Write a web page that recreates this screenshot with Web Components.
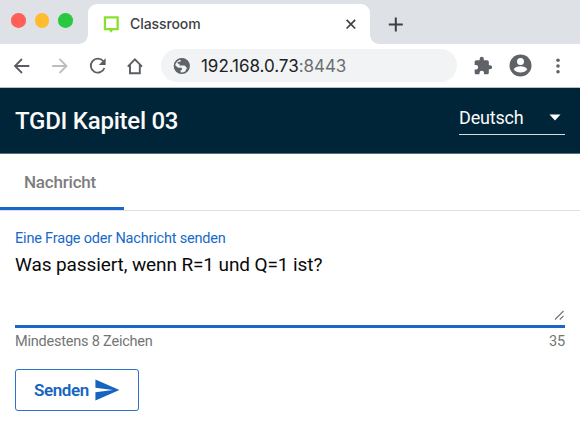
<!DOCTYPE html>
<html lang="de">
<head>
<meta charset="utf-8">
<title>Classroom</title>
<style>
html, body { margin: 0; height: 100%; background: #fff; overflow: hidden; }
body { font-family: Roboto, "Liberation Sans", sans-serif; }
</style>
</head>
<body>
<browser-window>
  <tab-strip slot="chrome">Classroom</tab-strip>
  <nav-bar slot="chrome"><span slot="host">192.168.0.73</span><span slot="port">:8443</span></nav-bar>
  <app-header>TGDI Kapitel 03<language-select slot="action">Deutsch</language-select></app-header>
  <app-tabs>Nachricht</app-tabs>
  <message-field>
    <span slot="label">Eine Frage oder Nachricht senden</span>
    <span slot="value">Was passiert, wenn R=1 und Q=1 ist?</span>
    <span slot="hint">Mindestens 8 Zeichen</span>
    <span slot="count">35</span>
  </message-field>
  <send-button>Senden</send-button>
</browser-window>
<script>
const define = (name, markup) => customElements.define(name, class extends HTMLElement {
  constructor() {
    super();
    this.attachShadow({ mode: 'open' }).innerHTML = markup;
  }
});

define('browser-window', `
<style>
:host { display: flex; flex-direction: column; width: 580px; height: 429px; background: #fff; }
</style>
<slot name="chrome"></slot><slot></slot>`);

define('tab-strip', `
<style>
:host { display: flex; box-sizing: border-box; height: 44px; background: #dee1e6; font: 14px/18px Inter, sans-serif; color: #3c4043; }
.lights { display: flex; gap: 9px; padding: 13px 0 0 11px; width: 77px; box-sizing: border-box; }
.lights i { width: 14.6px; height: 14.6px; flex: none; border-radius: 50%; }
.tab { position: relative; display: flex; align-items: center; box-sizing: border-box; width: 282px; height: 40px; margin: 4px 0 0 11px; padding: 0 13px 0 15px; background: #fff; border-radius: 9px 9px 0 0; }
.tab::before, .tab::after { content: ""; position: absolute; bottom: 0; width: 9px; height: 9px; }
.tab::before { left: -9px; background: radial-gradient(circle at 0 0, transparent 8.5px, #fff 9px); }
.tab::after { right: -9px; background: radial-gradient(circle at 100% 0, transparent 8.5px, #fff 9px); }
.title { flex: 1; margin-left: 11px; letter-spacing: -.08px; font-weight: 450; }
svg { display: block; flex: none; }
.plus { margin: 16px 0 0 17px; }
</style>
<div class="lights"><i style="background:#ff5f57"></i><i style="background:#febc2e"></i><i style="background:#28c840"></i></div>
<div class="tab">
  <svg width="16" height="18" viewBox="0 0 16 18"><path fill="#8be02f" fill-rule="evenodd" d="M.8 1.2h15v14H10l-2 2.600-2-2.600H.8zM3.100 3.500v9.400h10.400v-9.400z"/></svg>
  <span class="title"><slot></slot></span>
  <svg width="12" height="12" viewBox="0 0 12 12"><path d="M1.600 1.900l8.600 8.600M10.200 1.900l-8.600 8.600" stroke="#3c4043" stroke-width="1.700"/></svg>
</div>
<svg class="plus" width="16" height="16" viewBox="0 0 16 16"><path d="M8.800 1.600v14M1.800 8.600h14" stroke="#3c4043" stroke-width="2"/></svg>`);

define('nav-bar', `
<style>
:host { display: flex; align-items: center; box-sizing: border-box; height: 44px; padding: 0 14px 0 13px; background: #fff; border-bottom: 1px solid #b9bfc4; font: 17px/20px Inter, sans-serif; color: #202124; }
svg { display: block; flex: none; }
.fwd { margin-left: 20px; } .reload { margin-left: 20px; } .home { margin-left: 19px; }
.url { display: flex; align-items: center; box-sizing: border-box; width: 296px; height: 33px; margin-left: 17px; padding-left: 12px; border-radius: 17px; background: #f1f3f4; }
.text { margin-left: 10px; white-space: nowrap; letter-spacing: -.04px; }
.port { color: #6b6f73; }
.ext { margin-left: 16px; } .user { margin-left: 16px; } .menu { margin-left: auto; }
</style>
<svg width="18" height="18" viewBox="0 0 18 18"><path d="M16.300 9H2.200M9 2L2 9l7 7" fill="none" stroke="#5a5e63" stroke-width="1.800"/></svg>
<svg class="fwd" width="18" height="18" viewBox="0 0 18 18"><path d="M1.200 9h14.100M8.500 2l7 7-7 7" fill="none" stroke="#bbbdbf" stroke-width="1.800"/></svg>
<svg class="reload" width="18" height="18" viewBox="0 0 18 18"><path d="M14.300 4.300A7 7 0 1 0 15.400 11" fill="none" stroke="#5a5e63" stroke-width="1.800"/><path d="M16.600 1.300V8H9.800z" fill="#5a5e63"/></svg>
<svg class="home" width="18" height="18" viewBox="0 0 18 18"><path d="M1.800 9.600L8.900 2.400l7.100 7.200M4 8v8.200h9.800V8" fill="none" stroke="#5a5e63" stroke-width="1.900"/></svg>
<div class="url">
  <svg width="18" height="18" viewBox="0 0 18 18"><circle cx="8.800" cy="9" r="7.300" fill="#f1f3f4" stroke="#5f6368" stroke-width="1.600"/><path fill="#5f6368" d="M1.500 8l3.800 2.800h3.600v2.100H7.600v3.300C4 15.700 1 12.600 1.500 8zM7.300 1.700c4.400-.9 8.200 1.600 8.900 5.800.4 3.300-.9 5.800-3.100 7.300l-.5-1.700 1.500-1.800-2.400-2.700H6.500V6.700H4.700V4.900l3.100-.5z"/></svg>
  <span class="text"><slot name="host"></slot><span class="port"><slot name="port"></slot></span></span>
</div>
<svg class="ext" width="20" height="20" viewBox="0 0 24 24"><path fill="#5f6368" d="M20.500 11H19V7c0-1.100-.9-2-2-2h-4V3.500a2.500 2.500 0 0 0-5 0V5H4c-1.100 0-2 .9-2 2v3.800h1.500a2.700 2.700 0 0 1 0 5.400H2V20c0 1.100.9 2 2 2h3.800v-1.500a2.700 2.700 0 0 1 5.400 0V22H17c1.100 0 2-.9 2-2v-4h1.500a2.500 2.500 0 0 0 0-5z"/></svg>
<svg class="user" width="23" height="23" viewBox="0 0 23 23"><circle cx="11.500" cy="11.500" r="11" fill="#5f6368"/><circle cx="11.500" cy="7.400" r="3.500" fill="#fff"/><path fill="#fff" d="M4.700 15.300c1-2 4-3 6.800-3s5.800 1 6.800 3c-1.500 2.200-4 3.300-6.800 3.300s-5.300-1.100-6.800-3.300z"/></svg>
<svg class="menu" width="16" height="18" viewBox="0 0 16 18"><g fill="#5f6368"><circle cx="8" cy="3.200" r="1.800"/><circle cx="8" cy="9" r="1.800"/><circle cx="8" cy="14.800" r="1.800"/></g></svg>`);

define('app-header', `
<style>
:host { display: flex; align-items: center; justify-content: space-between; box-sizing: border-box; height: 66px; padding: 0 15px; background: #002538; border-bottom: 1px solid #557080; color: #fafafa; font: 500 24px/28px Roboto, sans-serif; }
.title { letter-spacing: -.25px; }
</style>
<span class="title"><slot></slot></span><slot name="action"></slot>`);

define('language-select', `
<style>
:host { display: flex; justify-content: space-between; box-sizing: border-box; width: 106px; height: 29px; border-bottom: 1px solid #d5dbdf; font: 400 18px/23px Roboto, sans-serif; letter-spacing: -.18px; }
svg { margin: 8px 4.500px 0 0; }
</style>
<span><slot></slot></span><svg width="12" height="8" viewBox="0 0 12 8"><path fill="#fff" d="M.5.500h11L6 6.500z"/></svg>`);

define('app-tabs', `
<style>
:host { display: block; box-sizing: border-box; height: 57px; border-bottom: 1px solid #e0e0e0; font: 500 17px/24px Roboto, sans-serif; letter-spacing: -.2px; color: #7d7d7d; }
.tab { box-sizing: border-box; width: 124px; height: 56px; padding: 16px 0 0 24px; border-bottom: 3px solid #1967c9; }
</style>
<div class="tab"><slot></slot></div>`);

define('message-field', `
<style>
:host { display: block; margin: 19px 15px 0; }
.label { font-size: 14.500px; line-height: 18px; letter-spacing: -.19px; color: #1769c8; }
.area { display: flex; justify-content: space-between; align-items: flex-end; box-sizing: border-box; height: 80px; border-bottom: 3px solid #1b67c7; font-size: 19px; letter-spacing: -.1px; color: #0a0a0a; }
.value { align-self: flex-start; line-height: 24px; padding-top: 5px; white-space: nowrap; }
svg { display: block; margin-bottom: 4px; }
.foot { display: flex; justify-content: space-between; padding-top: 5px; font-size: 14.500px; line-height: 18px; letter-spacing: -.21px; color: #757575; }
</style>
<div class="label"><slot name="label"></slot></div>
<div class="area"><span class="value"><slot name="value"></slot></span>
<svg width="12" height="12" viewBox="0 0 12 12"><path d="M2 10.500l8.500-8.500M6.800 10.500l3.700-3.700" stroke="#777" stroke-width="1.200"/></svg></div>
<div class="foot"><span class="hint"><slot name="hint"></slot></span><slot name="count"></slot></div>`);

define('send-button', `
<style>
:host { display: flex; align-items: center; box-sizing: border-box; width: 124px; height: 42px; margin: 18px 0 0 15px; padding-left: 18px; border: 1px solid #2b73cc; border-radius: 3px; color: #1565c0; font: 600 17px/22px Roboto, sans-serif; letter-spacing: -.4px; }
svg { margin-left: 6px; }
</style>
<span><slot></slot></span><svg width="25" height="22" viewBox="0 0 25 22"><path fill="#1565c0" d="M.4.500L24.400 11 .4 21.500v-8.200L18 11 .4 8.700z"/></svg>`);
</script>
</body>
</html>
